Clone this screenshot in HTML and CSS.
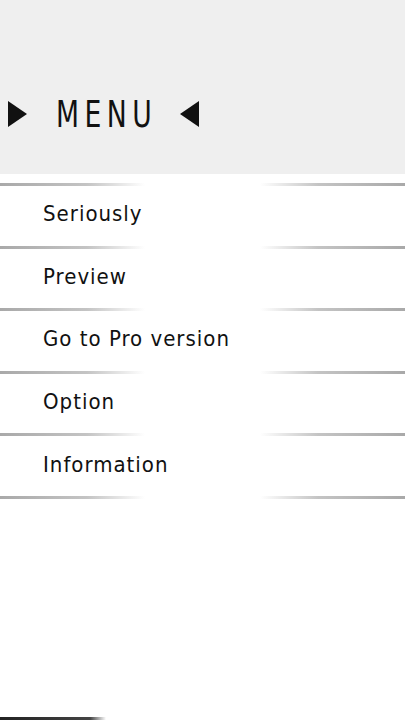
FILE: index.html
```html
<!DOCTYPE html>
<html lang="en">
<head>
  <meta charset="UTF-8">
  <meta name="viewport" content="width=device-width, initial-scale=1.0">
  <title>Menu</title>
  <link rel="stylesheet" href="styles.css">
</head>
<body>
  <header class="menu-head">
    <span class="arrow arrow-right"></span>
    <h1>MENU</h1>
    <span class="arrow arrow-left"></span>
  </header>

  <div class="menu-list">
    <div class="divider"><span class="seg seg-l"></span><span class="seg seg-r"></span></div>
    <div class="item">Seriously</div>
    <div class="divider"><span class="seg seg-l"></span><span class="seg seg-r"></span></div>
    <div class="item">Preview</div>
    <div class="divider"><span class="seg seg-l"></span><span class="seg seg-r"></span></div>
    <div class="item">Go to Pro version</div>
    <div class="divider"><span class="seg seg-l"></span><span class="seg seg-r"></span></div>
    <div class="item">Option</div>
    <div class="divider"><span class="seg seg-l"></span><span class="seg seg-r"></span></div>
    <div class="item">Information</div>
    <div class="divider"><span class="seg seg-l"></span><span class="seg seg-r"></span></div>
  </div>

  <div class="bottom-bar"></div>
</body>
</html>
```

FILE: styles.css
```css
* {
  margin: 0;
  padding: 0;
  box-sizing: border-box;
}
html, body {
  height: 100%;
}
body {
  font-family: "DejaVu Sans Condensed", "DejaVu Sans", sans-serif;
  background: #ffffff;
  color: #111;
  overflow: hidden;
  position: relative;
}
.menu-head {
  height: 174px;
  background: #efefef;
  display: flex;
  align-items: center;
  padding: 54px 0 0 8px;
}
.menu-head h1 {
  font-weight: normal;
  font-size: 38px;
  letter-spacing: 7px;
  width: 124px;
  transform: scaleX(0.78);
  transform-origin: left center;
  white-space: nowrap;
}
.arrow {
  width: 0;
  height: 0;
  border-top: 13px solid transparent;
  border-bottom: 13px solid transparent;
}
.arrow-right {
  border-left: 19px solid #111;
  margin-right: 29px;
}
.arrow-left {
  border-right: 19px solid #111;
}
.menu-list {
  padding-top: 9px;
}
.divider {
  height: 3px;
  display: flex;
  justify-content: space-between;
}
.seg {
  display: block;
  width: 145px;
  height: 3px;
}
.seg-l {
  background: linear-gradient(to right, #a9a9a9 0%, #c4c4c4 60%, rgba(255,255,255,0) 100%);
}
.seg-r {
  background: linear-gradient(to left, #a9a9a9 0%, #c4c4c4 60%, rgba(255,255,255,0) 100%);
}
.item {
  height: 59.6px;
  display: flex;
  align-items: center;
  padding: 0 0 4px 43px;
  font-size: 22px;
  letter-spacing: 1px;
}
.bottom-bar {
  position: absolute;
  left: 0;
  bottom: 0;
  width: 106px;
  height: 3px;
  background: linear-gradient(to right, #222 0%, #444 85%, rgba(255,255,255,0) 100%);
}
```
